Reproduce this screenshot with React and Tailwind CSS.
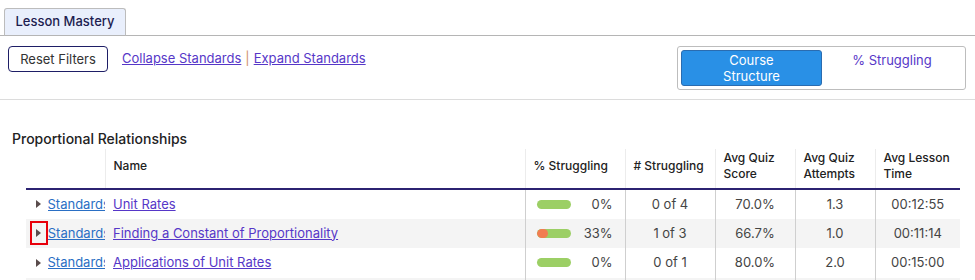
import React from 'react'

const rows = [
  { name: 'Unit Rates', pct: 0, num: '0 of 4', score: '70.0%', attempts: '1.3', time: '00:12:55' },
  { name: 'Finding a Constant of Proportionality', pct: 33, num: '1 of 3', score: '66.7%', attempts: '1.0', time: '00:11:14', focused: true },
  { name: 'Applications of Unit Rates', pct: 0, num: '0 of 1', score: '80.0%', attempts: '2.0', time: '00:15:00' },
]

function StruggleBar({ pct }) {
  return (
    <div className="relative h-[9px] w-[34px] overflow-hidden rounded-full bg-[#9ccf65]">
      <div className="absolute left-0 top-0 h-full rounded-full bg-[#f27d52]" style={{ width: pct ? `${pct}%` : 0 }} />
    </div>
  )
}

export default function App() {
  return (
    <div className="w-[975px] h-[280px] overflow-hidden bg-white text-[13px] text-[#333]" style={{ fontFamily: 'Inter, "Noto Sans", sans-serif' }}>
      {/* tabs */}
      <div className="flex items-end h-[36px] border-b border-[#b5b5b5] pl-[4px]">
        <div className="h-[28px] w-[122px] -mb-px flex items-center justify-center rounded-t-[3px] border border-[#bcbcbc] border-b-[#b5b5b5] bg-[#e9effc] text-[13px] font-medium text-[#1d1d50]">
          Lesson Mastery
        </div>
      </div>

      {/* toolbar */}
      <div className="flex h-[64px] items-start justify-between border-b border-[#dcdcdc] pl-[8px] pr-[9px] pt-[10px]">
        <div className="flex items-start">
          <button className="h-[26px] w-[100px] rounded-[4px] border border-[#1e1e66] bg-white pt-[1px] text-[13px] text-[#333]">
            Reset Filters
          </button>
          <div className="ml-[14px] mt-[3px] flex items-center text-[13px] text-[#5637c8]">
            <a className="underline" href="#">Collapse Standards</a>
            <span className="mx-[4px] text-[#d0916b]">|</span>
            <a className="underline" href="#">Expand Standards</a>
          </div>
        </div>
        <div className="flex h-[44px] w-[289px] rounded-[3px] border border-[#bdbdbd] p-[3px]">
          <button className="h-[36px] w-[141px] rounded-[3px] border border-[#2a6cb0] bg-[#2990e6] text-[13px] leading-[16px] text-white">
            Course<br />Structure
          </button>
          <button className="flex-1 self-start pt-[1px] text-[13px] text-[#5637c8]">% Struggling</button>
        </div>
      </div>

      {/* section */}
      <div className="pl-[12px] pt-[29px] text-[14px] font-medium leading-[20px] text-[#222]">Proportional Relationships</div>

      <div className="pl-[26px]">
        <table className="w-[934px] table-fixed border-collapse">
          <colgroup>
            <col className="w-[79px]" />
            <col className="w-[420px]" />
            <col className="w-[100px]" />
            <col className="w-[90px]" />
            <col className="w-[80px]" />
            <col className="w-[80px]" />
            <col className="w-[85px]" />
          </colgroup>
          <thead>
            <tr className="h-[40px] border-b-2 border-[#2c2372] text-left text-[12px] font-medium leading-[16px] text-[#222]">
              <th className="font-medium" />
              <th className="border-l border-[#ececec] px-[8px] pb-[6px] font-medium">Name</th>
              <th className="border-l border-[#ececec] px-[8px] pb-[6px] font-medium">% Struggling</th>
              <th className="border-l border-[#ececec] px-[8px] pb-[6px] font-medium">#&nbsp;Struggling</th>
              <th className="border-l border-[#ececec] px-[8px] pb-[6px] font-medium">Avg Quiz<br />Score</th>
              <th className="border-l border-[#ececec] px-[8px] pb-[6px] font-medium">Avg Quiz<br />Attempts</th>
              <th className="border-l border-[#ececec] px-[8px] pb-[6px] font-medium">Avg Lesson<br />Time</th>
            </tr>
          </thead>
          <tbody>
            {rows.map((r, i) => (
              <tr key={r.name} className={`h-[29.5px] ${i % 2 === 1 ? 'bg-[#f4f4f4]' : 'bg-white'}`}>
                <td className="p-0">
                  <div className="flex items-center">
                    <span className={`ml-[4px] flex h-[24px] w-[19px] items-center justify-center ${r.focused ? 'border-2 border-[#e8000b]' : ''}`}>
                      <svg width="5" height="8" viewBox="0 0 5 8"><path d="M0 0 L5 4 L0 8 Z" fill="#5a4c4c" /></svg>
                    </span>
                    <a href="#" className="overflow-hidden whitespace-nowrap text-[13px] text-[#2a6fc4] underline">Standards</a>
                  </div>
                </td>
                <td className="px-[8px]">
                  <a href="#" className="whitespace-nowrap text-[13px] text-[#5637c8] underline">{r.name}</a>
                </td>
                <td className="border-l border-[#cfcfcf] pl-[11px] pr-[12px]">
                  <div className="flex items-center justify-between">
                    <StruggleBar pct={r.pct} />
                    <span className="text-[#444]">{r.pct}%</span>
                  </div>
                </td>
                <td className="border-l border-[#cfcfcf] text-center text-[#444]">{r.num}</td>
                <td className="border-l border-[#cfcfcf] text-center text-[#444]">{r.score}</td>
                <td className="border-l border-[#cfcfcf] text-center text-[#444]">{r.attempts}</td>
                <td className="border-l border-[#cfcfcf] text-center text-[#444]">{r.time}</td>
              </tr>
            ))}
            <tr className="h-[29.5px] bg-[#f4f4f4]">
              <td />
              <td />
              <td className="border-l border-[#cfcfcf]" />
              <td className="border-l border-[#cfcfcf]" />
              <td className="border-l border-[#cfcfcf]" />
              <td className="border-l border-[#cfcfcf]" />
              <td className="border-l border-[#cfcfcf]" />
            </tr>
          </tbody>
        </table>
      </div>
    </div>
  )
}
